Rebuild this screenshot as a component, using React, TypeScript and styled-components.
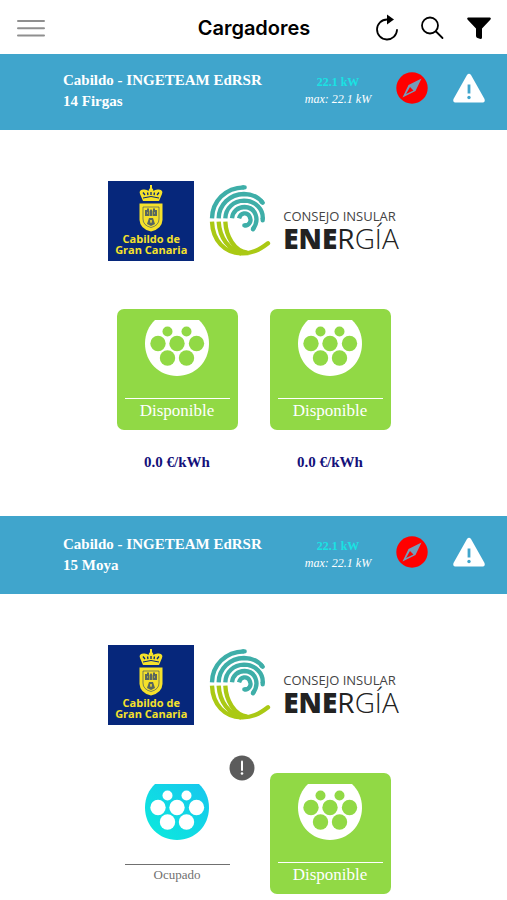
import React from "react";
import styled, { createGlobalStyle } from "styled-components";

const GlobalStyle = createGlobalStyle`
  * { box-sizing: border-box; }
  body {
    margin: 0;
    background: #fff;
    font-family: "Liberation Serif", "Times New Roman", serif;
  }
  button { border: 0; padding: 0; background: none; color: inherit; font: inherit; cursor: pointer; }
  svg { display: block; }
  h1, h2, p { margin: 0; }
`;

const NavBar = styled.header`
  position: sticky;
  top: 0;
  z-index: 2;
  display: grid;
  grid-template-columns: 1fr auto 1fr;
  align-items: center;
  height: 54px;
  padding: 2px 15px 0 16px;
  background: #fff;
`;

const Title = styled.h1`
  font: 600 20px/28px Inter, "Liberation Sans", sans-serif;
  color: #000;
`;

const MenuButton = styled.button`
  justify-self: start;
  color: #8f8f8f;
`;

const Actions = styled.div`
  display: flex;
  justify-content: flex-end;
  align-items: center;
  gap: 20px;
  color: #000;
`;

const StationList = styled.main`
  margin-top: -2px;
`;

const Station = styled.section`
  padding-bottom: 44px;
  &:last-child { padding-bottom: 6px; }
`;

const StationBar = styled.header`
  display: flex;
  align-items: flex-start;
  height: 78px;
  padding: 18px 22px 0 63px;
  background: #40a5cc;
  color: #fff;
`;

const StationName = styled.h2`
  flex: 1;
  font-size: 15px;
  line-height: 21px;
  font-weight: 700;
`;

const Power = styled.div`
  width: 76px;
  margin-right: 20px;
  padding-top: 4px;
  text-align: center;
  white-space: nowrap;
  font-size: 12px;
  line-height: 17px;
`;

const CurrentPower = styled.p`
  color: #19e3e3;
  font-weight: 700;
`;

const MaxPower = styled.p`
  font-style: italic;
`;

const BarButtons = styled.div`
  display: flex;
  gap: 25px;
  padding-top: 2px;
`;

const Logos = styled.div`
  display: flex;
  justify-content: center;
  align-items: center;
  height: 80px;
  margin-top: 51px;
`;

const CabildoLogo = styled.div`
  display: flex;
  flex-direction: column;
  align-items: center;
  width: 86px;
  height: 80px;
  padding-top: 4px;
  background: #06277b;
  color: #f5e12b;
  text-align: center;
  font: 700 11px/11px "Open Sans", "Noto Sans", sans-serif;
`;

const EnergyLogo = styled.div`
  display: flex;
  align-items: center;
  margin-left: 15px;
`;

const EnergyWords = styled.div`
  margin-left: 10px;
  padding-top: 18px;
  color: #222;
  font-family: "Open Sans", "Noto Sans", sans-serif;
  white-space: nowrap;
`;

const Council = styled.p`
  font-size: 13px;
  line-height: 16px;
  color: #444;
`;

const Energy = styled.p`
  font-size: 28px;
  line-height: 28px;
  font-weight: 300;
  b { font-weight: 800; }
  span { font-weight: 500; }
`;

const Connectors = styled.div`
  display: flex;
  justify-content: center;
  gap: 32px;
  margin-top: 48px;
`;

const Connector = styled.div`
  position: relative;
  width: 121px;
  text-align: center;
`;

const Card = styled.button<{ $busy?: boolean }>`
  display: flex;
  flex-direction: column;
  align-items: center;
  width: 100%;
  height: 121px;
  padding: 11px 8px 0;
  border-radius: 7px;
  background: ${(p) => (p.$busy ? "transparent" : "#91d945")};
  color: ${(p) => (p.$busy ? "#707070" : "#fff")};
`;

const Status = styled.span<{ $busy?: boolean }>`
  display: block;
  width: 105px;
  margin-top: ${(p) => (p.$busy ? 24 : 22)}px;
  border-top: 1px solid currentColor;
  font-size: ${(p) => (p.$busy ? 13 : 17)}px;
  line-height: ${(p) => (p.$busy ? 20 : 24)}px;
`;

const Price = styled.p`
  margin-top: 22px;
  color: #14107a;
  font-size: 15px;
  line-height: 20px;
  font-weight: 700;
`;

const Badge = styled.span`
  position: absolute;
  top: -18px;
  right: -17px;
`;

const MenuIcon = () => (
  <svg width="30" height="20" viewBox="0 0 30 20" stroke="currentColor" strokeWidth="2" strokeLinecap="round">
    <path d="M2 3H28M2 10.300H28M2 17.500H28" />
  </svg>
);

const ReloadIcon = () => (
  <svg width="26" height="30" viewBox="0 0 26 30" fill="none">
    <path d="M14.500 6.500H13A10 10 0 1 0 23 17" stroke="currentColor" strokeWidth="1.800" strokeLinecap="round" />
    <path d="M13 1.500L20 6.500L13 11.500Z" fill="currentColor" />
  </svg>
);

const SearchIcon = () => (
  <svg width="26" height="26" viewBox="0 0 26 26" fill="none" stroke="currentColor" strokeWidth="1.800" strokeLinecap="round">
    <circle cx="10" cy="10.500" r="8" />
    <path d="M16 16.500L22.500 23" />
  </svg>
);

const FilterIcon = () => (
  <svg width="26" height="24" viewBox="0 0 26 24">
    <path d="M2 1.500H24Q25.500 2 24.500 3.500L16 12.500V21.500Q16 23 14.500 23L11.500 22Q10 21.500 10 20V12.500L1.500 3.500Q.500 2 2 1.500Z" fill="currentColor" />
  </svg>
);

const CompassIcon = () => (
  <svg width="32" height="32" viewBox="0 0 32 32">
    <circle cx="16" cy="16" r="15.700" fill="#ff0000" />
    <path fillRule="evenodd" fill="#759cb9" d="M25.500 6.500L19.500 19L6.500 25.500L12.500 13ZM14 15L10 22L17.500 18.500Z" />
  </svg>
);

const WarningIcon = () => (
  <svg width="32" height="32" viewBox="0 0 32 32">
    <path d="M14 3Q16 .500 18 3L31.500 27Q32.500 30.500 29 30.500H3Q-.500 30.500 .500 27Z" fill="#fff" />
    <path d="M16 12.500V21.500" stroke="#40a5cc" strokeWidth="2.800" />
    <circle cx="16" cy="25.500" r="1.700" fill="#40a5cc" />
  </svg>
);

const Crest = () => (
  <svg width="28" height="48" viewBox="0 0 28 48">
    <g fill="#f5e12b">
      <path d="M6 16L3 9Q1.500 5 6 4.500Q10 4 11.500 6Q12 3 14 3Q16 3 16.500 6Q18 4 22 4.500Q26.500 5 25 9L22 16Z" />
      <path d="M13 0H15V4H13Z" />
      <path d="M2.500 18.500H25.500V35Q25 44 14 46.500Q3 44 2.500 35Z" />
    </g>
    <g fill="none" stroke="#06277b">
      <path d="M6 13Q14 10 22 13" strokeWidth="1" />
      <path d="M6 7.500L8 10M10.500 7.500L11 10M14 7V10M17.500 7.500L17 10M22 7.500L20 10" strokeWidth="1.300" />
      <path d="M6 22H22V34Q22 40.500 14 42.500Q6 40.500 6 34Z" strokeWidth="1" opacity=".5" />
    </g>
    <g fill="#06277b" opacity=".65">
      <path d="M8 25H10V23.500H12V31H8ZM16 23.500H18V25H20V31H16ZM12.500 26L14 24L15.500 26V31H12.500Z" />
      <path d="M10 39L12 33H16L18 39L14 41Z" />
    </g>
    <path d="M10 28H11M17 28H18M13 36H15M14 35V38" stroke="#f5e12b" />
  </svg>
);

const Swirl = () => (
  <svg width="64" height="74" viewBox="10 8 192 222" fill="none" strokeWidth="13">
    <g stroke="#3eaea8">
      <path d="M19 111C20 60 59 19 115 18" />
      <path d="M39 111C40 70 72 39 115 38C138 38 158 48 170 63" />
      <path d="M59 111C60 80 84 59 115 58C149 58 174 84 171 114" />
      <path d="M79 111C81 91 96 77 117 77C150 78 163 115 142 143" />
      <path d="M100 111C105 93 124 92 131 104C140 120 130 133 116 132" />
      <g strokeLinecap="round">
        <path d="M112 18H117M168 61L171 64M171 112V117M144 140L142 144M120 132H116" />
      </g>
    </g>
    <g stroke="#aac914" strokeLinecap="butt">
      <path d="M19 121C21 179 58 215 106 216" />
      <path d="M39 121C42 169 68 206 112 215" />
      <path d="M59 121C61 164 85 210 125 214" />
      <path d="M104 216C138 218 161 206 187 186" strokeLinecap="round" />
    </g>
  </svg>
);

const PlugIcon = ({ busy }: { busy?: boolean }) => (
  <svg width="64" height="56" viewBox="0 0 64 56">
    <defs>
      <linearGradient id="plug" x1="0" x2="1" y1="1" y2="0">
        <stop offset="0" stopColor="#0bebdc" />
        <stop offset="1" stopColor="#17c6ee" />
      </linearGradient>
    </defs>
    <path
      fill={busy ? "url(#plug)" : "#fff"}
      d="M10 0H54C60 5.500 64 14 64 23.500C64 42 50 56 32 56S0 42 0 23.500C0 14 4 5.500 10 0Z"
    />
    <g fill={busy ? "#fff" : "#91d945"}>
      <circle cx="22.500" cy="11.500" r="5" />
      <circle cx="41.500" cy="11.500" r="5" />
      <circle cx="13" cy="23.500" r="7.700" />
      <circle cx="32" cy="23.500" r="7.700" />
      <circle cx="51.500" cy="23.500" r="7.700" />
      <circle cx="22.500" cy="38" r="7.700" />
      <circle cx="41.500" cy="38" r="7.700" />
    </g>
  </svg>
);

const AlertIcon = () => (
  <svg width="26" height="26" viewBox="0 0 26 26">
    <circle cx="13" cy="13" r="12.500" fill="#5c5c5c" />
    <path d="M13 6.500V15" stroke="#fff" strokeWidth="2" strokeLinecap="round" />
    <circle cx="13" cy="18.500" r="1.300" fill="#fff" />
  </svg>
);

type StationData = { id: string; place: string; busy: boolean[]; price?: string };

const stations: StationData[] = [
  { id: "14", place: "14 Firgas", busy: [false, false], price: "0.0 €/kWh" },
  { id: "15", place: "15 Moya", busy: [true, false] },
];

export default function App() {
  return (
    <>
      <GlobalStyle />
      <NavBar>
        <MenuButton aria-label="Menú"><MenuIcon /></MenuButton>
        <Title>Cargadores</Title>
        <Actions>
          <button aria-label="Actualizar"><ReloadIcon /></button>
          <button aria-label="Buscar"><SearchIcon /></button>
          <button aria-label="Filtrar"><FilterIcon /></button>
        </Actions>
      </NavBar>
      <StationList>
        {stations.map((s) => (
          <Station key={s.id}>
            <StationBar>
              <StationName>Cabildo - INGETEAM EdRSR<br />{s.place}</StationName>
              <Power>
                <CurrentPower>22.1 kW</CurrentPower>
                <MaxPower>max: 22.1 kW</MaxPower>
              </Power>
              <BarButtons>
                <button aria-label="Cómo llegar"><CompassIcon /></button>
                <button aria-label="Avisos"><WarningIcon /></button>
              </BarButtons>
            </StationBar>
            <Logos>
              <CabildoLogo>
                <Crest />
                <span>Cabildo de<br />Gran Canaria</span>
              </CabildoLogo>
              <EnergyLogo>
                <Swirl />
                <EnergyWords>
                  <Council>CONSEJO INSULAR</Council>
                  <Energy><b>ENE</b><span>R</span>GÍA</Energy>
                </EnergyWords>
              </EnergyLogo>
            </Logos>
            <Connectors>
              {s.busy.map((busy, i) => (
                <Connector key={i}>
                  <Card $busy={busy}>
                    <PlugIcon busy={busy} />
                    <Status $busy={busy}>{busy ? "Ocupado" : "Disponible"}</Status>
                  </Card>
                  {busy && <Badge><AlertIcon /></Badge>}
                  {s.price && <Price>{s.price}</Price>}
                </Connector>
              ))}
            </Connectors>
          </Station>
        ))}
      </StationList>
    </>
  );
}
